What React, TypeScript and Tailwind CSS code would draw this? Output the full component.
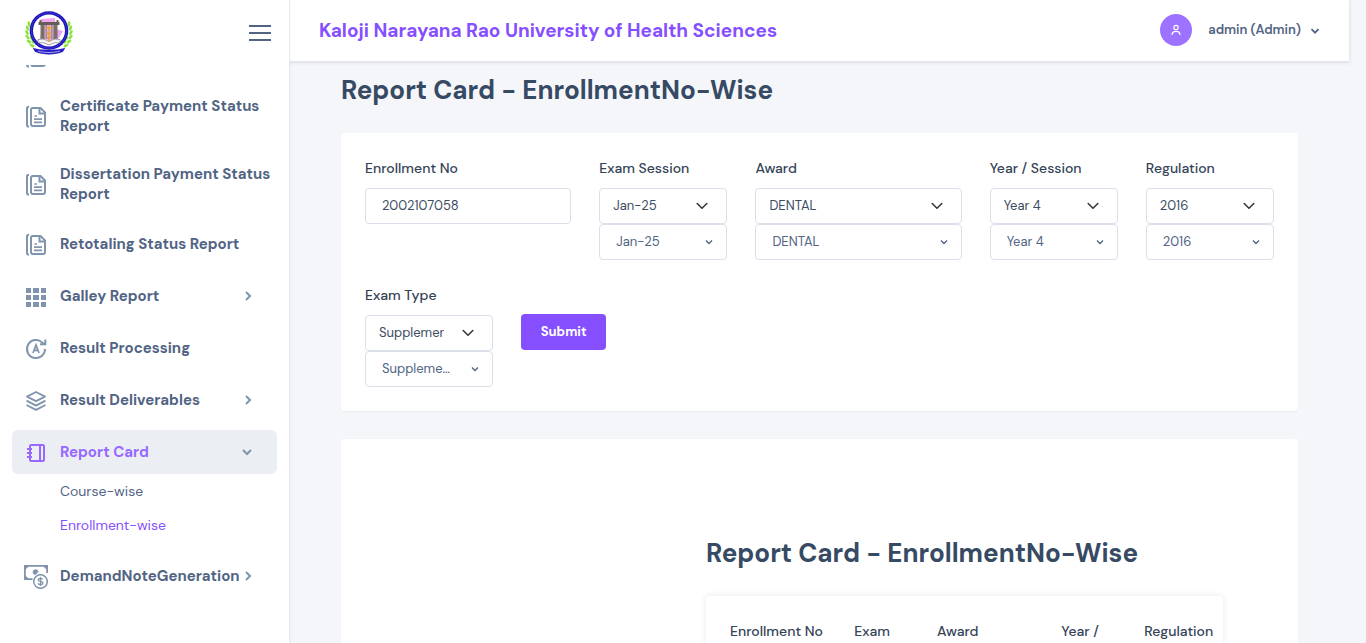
import React from "react";

type IconProps = { className?: string };

function DocumentsIcon({ className = "" }: IconProps) {
  return (
    <svg viewBox="0 0 24 24" className={className} fill="none" stroke="currentColor" strokeWidth="2" aria-hidden="true">
      <path d="M5 1.800C3.600 1.800 3 2.400 3 3.600v16.200c0 1.200.6 1.900 2 2" />
      <path d="M9 3h7.500L21 7.500V19a2 2 0 0 1-2 2H9a2 2 0 0 1-2-2V5a2 2 0 0 1 2-2Z" />
      <path d="M15.500 3.200V8.500H21" />
      <path d="M10.500 11H13M10 14.200h8M10 17.400h8" strokeWidth="1.700" />
    </svg>
  );
}

function GridIcon({ className = "" }: IconProps) {
  return (
    <svg viewBox="0 0 24 24" className={className} fill="currentColor" aria-hidden="true">
      <path d="M2 3h5v5H2zM9 3h6v5H9zM17 3h5v5h-5zM2 10h5v5H2zM9 10h6v5H9zM17 10h5v5h-5zM2 17h5v5H2zM9 17h6v5H9zM17 17h5v5h-5z" />
    </svg>
  );
}

function ProcessingIcon({ className = "" }: IconProps) {
  return (
    <svg viewBox="0 0 24 24" className={className} fill="none" stroke="currentColor" strokeWidth="2" aria-hidden="true">
      <path d="M21 12A9 9 0 1 1 18.300 5.600L20.500 7.400" />
      <path d="M21.300 2.500V7.300H16" />
      <path d="M9 16l3-8 3 8M10.100 13.400h3.800" strokeWidth="1.700" />
    </svg>
  );
}

function LayersIcon({ className = "" }: IconProps) {
  return (
    <svg viewBox="0 0 24 24" className={className} fill="none" stroke="currentColor" strokeWidth="1.900" strokeLinejoin="round" aria-hidden="true">
      <path d="M12 3 21 7.600 12 12.200 3 7.600Z" />
      <path d="M2.500 11.700 12 16.600l9.500-4.900" />
      <path d="M2.500 16 12 20.900l9.500-4.900" />
    </svg>
  );
}

function NotebookIcon({ className = "" }: IconProps) {
  return (
    <svg viewBox="0 0 24 24" className={className} fill="none" stroke="currentColor" strokeWidth="2" aria-hidden="true">
      <rect x="6" y="4" width="14" height="16" rx="1.200" />
      <path d="M16 4v16M3 8h5M3 12h5M3 16h5" />
    </svg>
  );
}

function CashIcon({ className = "" }: IconProps) {
  return (
    <svg viewBox="0 0 24 24" className={className} fill="none" stroke="currentColor" aria-hidden="true">
      <path d="M8.500 14.200H.9V.9h22.200V8" strokeWidth="1.800" />
      <path d="M0 0h6L0 6zM24 0h-6l6 6zM0 15V9l6 6z" fill="currentColor" stroke="none" />
      <path d="M9.200 9a3 3 0 1 1 5.400-2.400L11.500 10Z" fill="currentColor" stroke="none" />
      <circle cx="16.500" cy="16.500" r="6.800" strokeWidth="1.500" />
      <path d="M18.700 14.600c-.3-.8-1-1.200-2.200-1.200-1.400 0-2.200.6-2.200 1.500 0 2.200 4.500.9 4.500 3.200 0 1-.9 1.600-2.300 1.600-1.300 0-2.100-.5-2.400-1.400M16.500 12v9" strokeWidth="1.300" />
    </svg>
  );
}

function Chevron({ className = "" }: IconProps) {
  return (
    <svg viewBox="0 0 12 12" className={className} fill="none" stroke="currentColor" strokeWidth="2" aria-hidden="true">
      <path d="M2 4l4 4 4-4" />
    </svg>
  );
}

function Emblem() {
  const leaves = [
    [5, 14, -10], [3.500, 18, -20], [3, 22.500, -30], [3.500, 27, -45], [5, 31.500, -55], [8, 35.500, -65],
    [8.200, 18, 30], [7.200, 22.500, 20], [7.500, 27, 5], [9, 31, -10],
  ];
  return (
    <svg viewBox="0 0 50 46" className="h-[46px] w-[50px]" role="img" aria-label="University emblem">
      {[0, 1].map((side) => (
        <g key={side} transform={side ? "translate(50 0) scale(-1 1)" : undefined} fill="#8be33c">
          {leaves.map(([x, y, r]) => (
            <ellipse key={`${x}-${y}`} cx={x} cy={y} rx="1.400" ry="2.700" transform={`rotate(${r} ${x} ${y})`} />
          ))}
        </g>
      ))}
      <path d="M8.500 37.500c5 3 28 3 33 0l-2.500 4.200c-8 3.700-20 3.700-28 0Z" fill="#2a1fc4" />
      <path d="M14 41c7 2 15 2 22 0" stroke="#aaa6ee" strokeWidth="1" fill="none" />
      <circle cx="25" cy="20.500" r="19.300" fill="#1d14bd" />
      <circle cx="25" cy="20.500" r="17.600" fill="none" stroke="#6d67dc" strokeWidth=".7" strokeDasharray="1 1" />
      <circle cx="25" cy="20.500" r="16" fill="#fff" />
      <path d="M17 9l14-1 1 11 7 2-4 7-8 3-11-3 2-8Z" fill="#efa5ef" />
      <path d="M14.500 12h21v3h-21z" fill="#655e58" />
      <path d="M15.500 10h2v3h-2zM32.500 10h2v3h-2z" fill="#655e58" />
      <path d="M16.500 15h4v16h-4zM29.500 15h4v16h-4z" fill="#77706a" />
      <path d="M21.500 15h1.500v14h-1.500zM27 15h1.500v14H27z" fill="#968f88" />
      <path d="M14 29.500q6-2 11 2 5-4 11-2v3.500q-6-1.500-11 2-5-3.500-11-2Z" fill="#f4f2f2" stroke="#6d6672" strokeWidth=".6" />
      <path d="M25 16v16M21 19q4-3 8 0M22.500 24q2.500-2.500 5 0M23 28q2-2 4 0" stroke="#dda53b" strokeWidth="1.500" fill="none" />
      <circle cx="25" cy="17" r="1.300" fill="#e5ae3e" />
    </svg>
  );
}

type MenuEntry = {
  label: string;
  Icon: (p: IconProps) => React.ReactElement;
  expandable?: boolean;
  active?: boolean;
  children?: { label: string; current?: boolean }[];
};

const menu: MenuEntry[] = [
  { label: "Certificate Payment Status Report", Icon: DocumentsIcon },
  { label: "Dissertation Payment Status Report", Icon: DocumentsIcon },
  { label: "Retotaling Status Report", Icon: DocumentsIcon },
  { label: "Galley Report", Icon: GridIcon, expandable: true },
  { label: "Result Processing", Icon: ProcessingIcon },
  { label: "Result Deliverables", Icon: LayersIcon, expandable: true },
  {
    label: "Report Card",
    Icon: NotebookIcon,
    expandable: true,
    active: true,
    children: [{ label: "Course-wise" }, { label: "Enrollment-wise", current: true }],
  },
  { label: "DemandNoteGeneration", Icon: CashIcon, expandable: true },
];

function MenuItem({ item }: { item: MenuEntry }) {
  const { Icon } = item;
  return (
    <li>
      <a
        href="#"
        className={`flex min-h-11 items-center rounded-md py-2.5 pl-3 text-[15px] leading-5 font-bold ${
          item.expandable ? "pr-6" : "pr-0"
        } ${item.active ? "bg-[#ebeef2] text-[#9769ff]" : "text-[#526484]"}`}
      >
        <Icon className={`-mb-0.5 mr-3 size-6 shrink-0 ${item.active ? "text-[#9769ff]" : "text-[#8094ae]"}`} />
        <span className="flex-1">{item.label}</span>
        {item.expandable && (
          <Chevron className={`size-3 shrink-0 text-[#8094ae] ${item.active ? "" : "-mr-px -rotate-90"}`} />
        )}
      </a>
      {item.children && (
        <ul className="pb-1 pl-12">
          {item.children.map((c) => (
            <li key={c.label}>
              <a
                href="#"
                className={`block py-[7px] text-[14px] leading-5 ${c.current ? "text-[#854fff]" : "text-[#526484]"}`}
              >
                {c.label}
              </a>
            </li>
          ))}
        </ul>
      )}
    </li>
  );
}

function Sidebar() {
  return (
    <aside className="z-10 flex w-[290px] shrink-0 flex-col border-r border-[#e5e9f2] bg-white shadow-[0_1px_3px_rgba(54,74,99,0.08)]">
      <div className="flex h-[65px] shrink-0 items-center justify-between pr-[18px] pl-6">
        <a href="#">
          <Emblem />
        </a>
        <button type="button" aria-label="Toggle menu" className="text-[#526484]">
          <svg viewBox="0 0 22 18" className="h-[18px] w-[22px]" fill="currentColor" aria-hidden="true">
            <path d="M0 1h22v2H0zM0 8h22v2H0zM0 15h22v2H0z" />
          </svg>
        </button>
      </div>
      <nav className="min-h-0 flex-1 overflow-hidden px-3">
        <div className="-mt-[31px] mb-2 flex h-11 items-center pt-0.5 pl-3">
          <DocumentsIcon className="size-6 text-[#8094ae]" />
        </div>
        <ul className="flex flex-col gap-2">
          {menu.map((m) => (
            <MenuItem key={m.label} item={m} />
          ))}
        </ul>
      </nav>
    </aside>
  );
}

function TopBar() {
  return (
    <header className="mr-[17px] flex h-[61px] shrink-0 items-center justify-between bg-white pr-7 pb-px pl-[29px] shadow-[0_1px_3px_1px_rgba(54,74,99,0.12)]">
      <p className="pt-0.5 text-[19px] leading-7 font-bold text-[#854fff]">
        Kaloji Narayana Rao University of Health Sciences
      </p>
      <button type="button" className="flex items-center text-[13px] font-semibold text-[#526484]">
        <span className="mr-4 flex size-8 items-center justify-center rounded-full bg-[#9d72ff] text-white">
          <svg viewBox="0 0 12 12" className="size-3" fill="none" stroke="currentColor" strokeWidth="1.200" aria-hidden="true">
            <circle cx="6" cy="3.500" r="2.200" />
            <path d="M2 11C2 8.500 3.700 7.300 6 7.300S10 8.500 10 11" />
          </svg>
        </span>
        admin (Admin)
        <svg viewBox="0 0 12 12" className="mt-0.5 ml-2 size-3" fill="none" stroke="currentColor" strokeWidth="1.800" aria-hidden="true">
          <path d="M2.500 4.200l3.500 3.500 3.500-3.500" />
        </svg>
      </button>
    </header>
  );
}

type Field = { id: string; label: string; value: string; wide?: boolean; text?: boolean };

const fields: Field[] = [
  { id: "enrollment", label: "Enrollment No", value: "2002107058", wide: true, text: true },
  { id: "exam-session", label: "Exam Session", value: "Jan-25" },
  { id: "award", label: "Award", value: "DENTAL", wide: true },
  { id: "year", label: "Year / Session", value: "Year 4" },
  { id: "regulation", label: "Regulation", value: "2016" },
  { id: "exam-type", label: "Exam Type", value: "Supplementary" },
];

const box = "h-9 w-full rounded border border-[#dbdfea] bg-white text-[13px]";

function FieldControl({ field, prefix }: { field: Field; prefix: string }) {
  const id = `${prefix}-${field.id}`;
  return (
    <div className={field.wide ? "col-span-3" : "col-span-2"}>
      <label htmlFor={id} className="mb-2 block text-[14px] leading-[23px] font-medium text-[#344357]">
        {field.label}
      </label>
      {field.text ? (
        <input id={id} type="text" defaultValue={field.value} className={`${box} block px-4 pb-0.5 text-[#3c4d62]`} />
      ) : (
        <>
          <div className="relative">
            <select id={id} defaultValue={field.value} className={`${box} block appearance-none pr-12 pl-[13px] text-[#3c4d62]`}>
              <option>{field.value}</option>
            </select>
            <svg viewBox="0 0 12 12" className="pointer-events-none absolute top-3 right-[19px] size-3 text-[#343a40]" fill="none" stroke="currentColor" strokeWidth="1.600" strokeLinecap="round" strokeLinejoin="round" aria-hidden="true">
              <path d="M1.200 3.500L6 8.300l4.800-4.800" />
            </svg>
          </div>
          <button type="button" aria-label={`${field.label} list`} className={`${box} flex items-center pr-3 pl-4 text-[#526484]`}>
            <span className="mr-5 min-w-0 flex-1 truncate text-left">{field.value}</span>
            <svg viewBox="0 0 10 10" className="size-2.5 shrink-0" fill="none" stroke="currentColor" strokeWidth="1.400" aria-hidden="true">
              <path d="M2 3.500l3 3 3-3" />
            </svg>
          </button>
        </>
      )}
    </div>
  );
}

function PageTitle() {
  return <h1 className="text-[26px] leading-9 font-bold text-[#364a63]">Report Card - EnrollmentNo-Wise</h1>;
}

function FilterForm({ prefix }: { prefix: string }) {
  return (
    <form className="grid grid-cols-12 gap-x-7 gap-y-6 p-6" onSubmit={(e) => e.preventDefault()}>
      {fields.map((f) => (
        <FieldControl key={f.id} field={f} prefix={prefix} />
      ))}
      <div className="col-span-2 pt-[30px]">
        <button type="submit" className="h-9 w-[85px] rounded bg-[#854fff] text-[13px] font-bold text-white">
          Submit
        </button>
      </div>
    </form>
  );
}

export default function App() {
  return (
    <div className="flex h-screen overflow-hidden bg-[#f5f6fa] font-['DM_Sans','Inter',sans-serif]">
      <Sidebar />
      <div className="flex min-w-0 flex-1 flex-col">
        <TopBar />
        <main className="min-h-0 flex-1 overflow-hidden pt-[11px] pr-[68px] pl-[51px]">
          <PageTitle />
          <section className="mt-[25px] rounded bg-white shadow-[0_1px_2px_rgba(54,74,99,0.06)]">
            <FilterForm prefix="filter" />
          </section>
          <section className="mt-7 rounded bg-white pt-24 pr-[75px] pb-6 pl-[365px] shadow-[0_1px_2px_rgba(54,74,99,0.06)]">
            <PageTitle />
            <div className="mt-[25px] rounded bg-white shadow-[0_0_6px_rgba(54,74,99,0.13)]">
              <FilterForm prefix="report" />
            </div>
          </section>
        </main>
      </div>
    </div>
  );
}
